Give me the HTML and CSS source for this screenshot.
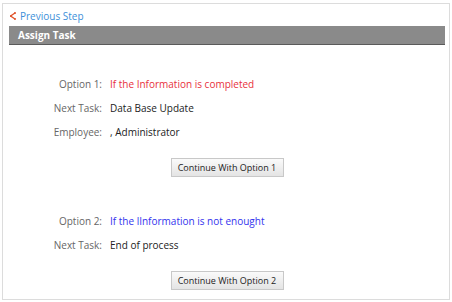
FILE: index.html
```html
<!DOCTYPE html>
<html>
<head>
<meta charset="utf-8">
<link rel="stylesheet" href="styles.css">
</head>
<body>
<div class="panel">
  <div class="back">
    <svg class="back-icon" width="6" height="8" viewBox="0 0 6 8"><path d="M0.5 4 L5 1 M0.5 4 L5 7" stroke="#e0532a" stroke-width="1.4" fill="none"/><circle cx="1" cy="4" r="1.1" fill="#e0532a"/><circle cx="5" cy="1" r="1" fill="#e0532a"/><circle cx="5" cy="7" r="1" fill="#e0532a"/></svg>
    <a class="back-link" href="#">Previous Step</a>
  </div>
  <div class="header">Assign Task</div>
  <div class="option">
    <div class="row"><span class="label">Option 1:</span><span class="value red">If the Information is completed</span></div>
    <div class="row"><span class="label">Next Task:</span><span class="value">Data Base Update</span></div>
    <div class="row"><span class="label">Employee:</span><span class="value">, Administrator</span></div>
    <div class="actions"><button class="btn">Continue With Option 1</button></div>
  </div>
  <div class="option second">
    <div class="row"><span class="label">Option 2:</span><span class="value blue">If the lInformation is not enought</span></div>
    <div class="row"><span class="label">Next Task:</span><span class="value">End of process</span></div>
    <div class="actions"><button class="btn">Continue With Option 2</button></div>
  </div>
</div>
</body>
</html>
```
FILE: styles.css
```css
html, body {
  margin: 0;
  padding: 0;
  background: #fff;
}
body {
  font-family: "Open Sans", "Liberation Sans", sans-serif;
  font-size: 10px;
  color: #222;
}
.panel {
  margin: 3px 0 0 2px;
  width: 448px;
  height: 297px;
  border: 1px solid #dcdcdc;
  box-sizing: border-box;
  padding: 0 4px 0 6px;
}
.back {
  display: flex;
  align-items: center;
  height: 22px;
  padding-top: 1px;
  box-sizing: border-box;
  gap: 4px;
}
.back-icon {
  margin-left: 1px;
}
.back-link {
  color: #3d8fd9;
  text-decoration: none;
}
.header {
  background: #8a8a8a;
  border-bottom: 1px solid #5a5a5a;
  color: #fff;
  font-weight: bold;
  height: 18px;
  line-height: 18px;
  padding-left: 9px;
}
.option {
  padding-top: 27px;
}
.option.second {
  padding-top: 32px;
}
.row {
  display: grid;
  grid-template-columns: 93px 1fr;
  column-gap: 8px;
  height: 24px;
  line-height: 24px;
}
.label {
  text-align: right;
  color: #666;
}
.value.red { color: #e8303c; }
.value.blue { color: #3333ee; }
.actions {
  display: flex;
  justify-content: center;
  margin-top: 14px;
}
.second .actions {
  margin-top: 14px;
}
.btn {
  font-family: "Open Sans", "Liberation Sans", sans-serif;
  font-size: 9px;
  color: #222;
  height: 19px;
  width: 113px;
  padding: 0;
  white-space: nowrap;
  border: 1px solid #c8c8c8;
  background: linear-gradient(#fafafa, #e4e4e4);
  border-radius: 0;
}
```
